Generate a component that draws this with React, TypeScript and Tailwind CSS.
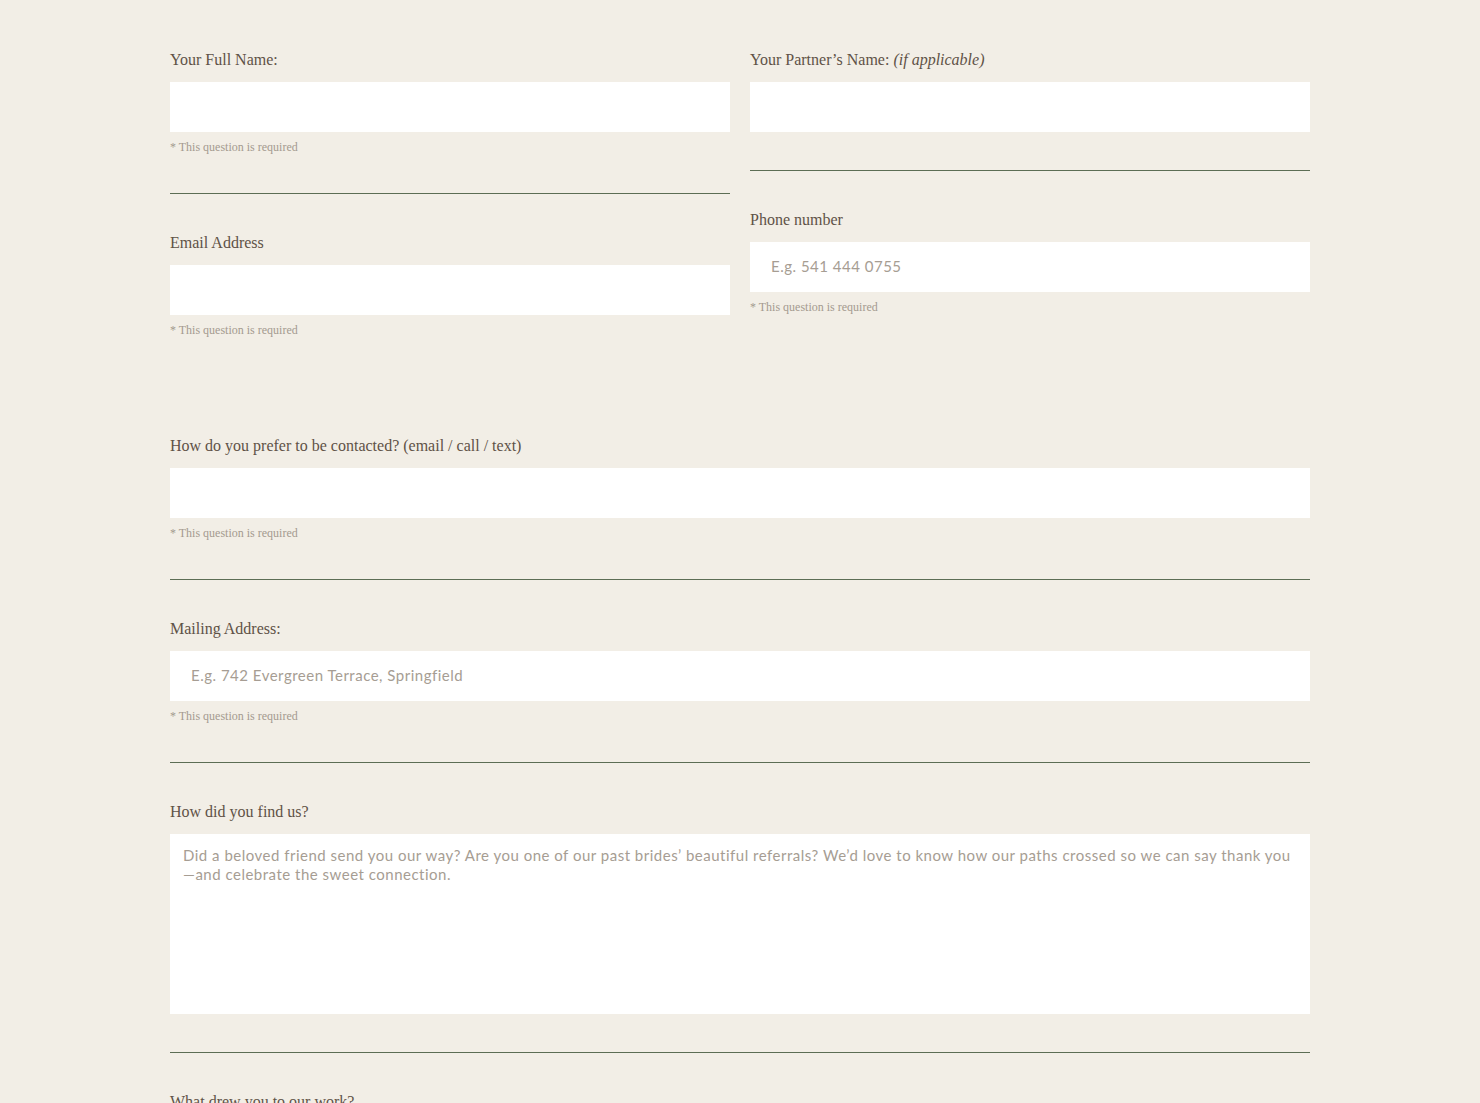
import React from 'react';

const serif = 'font-["Liberation_Serif",_"Times_New_Roman",_serif]';
const sans = 'font-["Lato",_"Open_Sans",_sans-serif] tracking-[0.5px]';

function Hint() {
  return (
    <p className={`${serif} mt-[7px] h-[16px] text-[12px] leading-[16px] text-[#a49a8f]`}>
      * This question is required
    </p>
  );
}

interface FieldProps {
  label: React.ReactNode;
  placeholder?: string;
  required?: boolean;
  divider?: boolean;
}

function Label({ children }: { children: React.ReactNode }) {
  return <label className={`${serif} block text-[16px] leading-[24px] text-[#5f5246]`}>{children}</label>;
}

function Field({ label, placeholder = '', required, divider = true }: FieldProps) {
  return (
    <div className={divider ? 'border-b border-[#5c6d54] pb-[38px] mb-[37px]' : ''}>
      <Label>{label}</Label>
      <input
        type="text"
        placeholder={placeholder}
        className={`${sans} mt-[10px] block h-[50px] w-full bg-white px-[21px] pb-[3px] text-[15px] text-[#5f5246] outline-none placeholder:text-[#a69d93]`}
      />
      {required && <Hint />}
    </div>
  );
}

export default function App() {
  return (
    <div className="min-h-screen bg-[#f2eee6]">
      <form className="mx-auto w-[1140px] pt-[48px] pb-24">
        <div className="grid grid-cols-2 items-start gap-x-[20px]">
          <div>
            <Field label="Your Full Name:" required />
            <Field label="Email Address" required divider={false} />
          </div>
          <div>
            <Field
              label={
                <>
                  Your Partner’s Name: <em>(if applicable)</em>
                </>
              }
            />
            <Field label="Phone number" placeholder="E.g. 541 444 0755" required divider={false} />
          </div>
        </div>

        <div className="mt-[96px]">
          <Field label="How do you prefer to be contacted? (email / call / text)" required />
          <Field label="Mailing Address:" placeholder="E.g. 742 Evergreen Terrace, Springfield" required />

          <div className="mb-[37px] border-b border-[#5c6d54] pb-[38px]">
            <Label>How did you find us?</Label>
            <textarea
              placeholder="Did a beloved friend send you our way? Are you one of our past brides’ beautiful referrals? We’d love to know how our paths crossed so we can say thank you—and celebrate the sweet connection."
              className={`${sans} mt-[10px] block h-[180px] w-full resize-none bg-white px-[13px] py-[12px] text-[15px] leading-[19px] text-[#5f5246] outline-none placeholder:text-[#a69d93]`}
            />
          </div>

          <div>
            <Label>What drew you to our work?</Label>
            <textarea
              className={`${sans} mt-[10px] block h-[180px] w-full resize-none bg-white px-[13px] py-[12px] text-[15px] leading-[19px] text-[#5f5246] outline-none`}
            />
          </div>
        </div>
      </form>
    </div>
  );
}
